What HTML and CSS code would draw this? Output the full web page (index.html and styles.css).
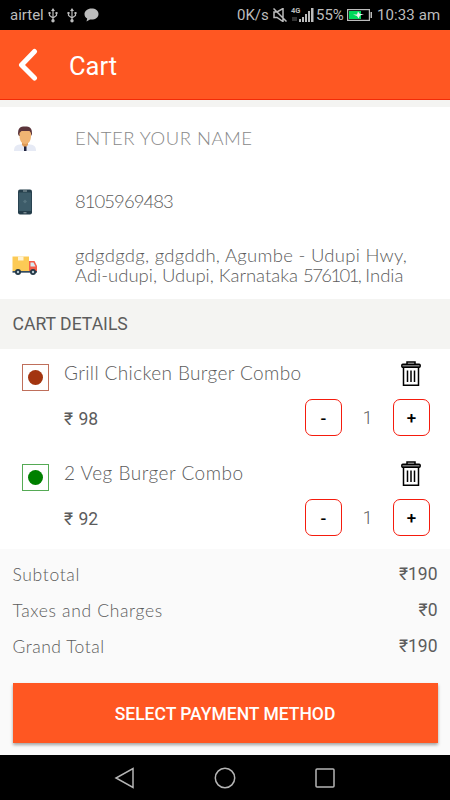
FILE: index.html
```html
<!DOCTYPE html>
<html lang="en">
<head>
<meta charset="utf-8">
<title>Cart</title>
<link rel="stylesheet" href="styles.css">
</head>
<body>
<svg class="defs" aria-hidden="true">
  <symbol id="usb" viewBox="0 0 10 15"><path d="M5 1.500V13M1.500 4.500v3L5 10l3.500-2.500v-3" fill="none" stroke="currentColor" stroke-width="1.200"/><path d="M5 0l2 3H3zM.5 4h2v2h-2zM7.500 4h2v2h-2z" fill="currentColor"/><circle cx="5" cy="12.800" r="1.700" fill="currentColor"/></symbol>
  <symbol id="trash" viewBox="0 0 20 26"><path d="M6 3V1h8v2M2.500 6.500V24.200h15V6.500M6.500 9.500V21M10 9.500V21M13.500 9.500V21" fill="none" stroke="#000" stroke-width="1.500"/><rect x=".8" y="3.300" width="18.400" height="3" rx="1" fill="#777" stroke="#000" stroke-width="1.400"/></symbol>
</svg>
<div class="status">
  <span class="carrier">airtel</span>
  <svg class="usb"><use href="#usb"/></svg>
  <svg class="usb second"><use href="#usb"/></svg>
  <svg class="bubble" viewBox="0 0 15 14"><path d="M7.500.5C3.500.5.5 3 .5 6c0 2 1 3.500 2.700 4.500L2.500 13.500 6 11.500c5 .6 8.500-2 8.500-5.500S11.500.5 7.500.5z" fill="#bcbcbc"/></svg>
  <span class="speed">0K/s</span>
  <svg class="mute" viewBox="0 0 14 14"><path d="M1 4h3l6-3.500v13L4 9.500H1zM.5.5l13 13" fill="none" stroke="#bcbcbc" stroke-width="1.500"/></svg>
  <div class="signal"><span class="net">4G</span>
  <svg viewBox="0 0 23 14" width="23" height="14"><path d="M1 9h5v4H1z" fill="#333"/><path d="M8 11h2v3H8zM11 9h2v5h-2zM14 6h2v8h-2zM17 3h2v11h-2zM20 0h2.500v14H20z" fill="#bcbcbc"/></svg></div>
  <span class="percent">55%</span>
  <svg class="battery" viewBox="0 0 25 12"><rect x=".6" y=".6" width="21.800" height="10.800" fill="#000" stroke="#bcbcbc" stroke-width="1.200"/><path d="M2 2h12v8H2z" fill="#00d85a"/><path d="M23.500 3H25v6h-1.500z" fill="#bcbcbc"/><path d="M6 5.500h4l1-3 2 2.500h4L13 6.500l-1.500 3L10 7z" fill="#eee"/></svg>
  <span class="clock">10:33 am</span>
</div>
<header class="bar">
  <svg class="back" viewBox="0 0 20 34"><path d="M16.500 3.500L3.500 17l13 13" fill="none" stroke="#fff" stroke-width="5" stroke-linecap="round" stroke-linejoin="round"/></svg>
  <h1>Cart</h1>
</header>
<section class="contact">
  <div class="row">
    <svg class="icon" viewBox="0 0 26 26"><path d="M2 25c0-5 2-6 8-7h6c6 1 8 2 8 7z" fill="#e6eaf5"/><path d="M10 15h6v4l-3 3-3-3z" fill="#df9a56"/><path d="M6 8C6 2 8 .5 13 .5S20 2 20 8l-1 2H7z" fill="#5b343b"/><path d="M7.500 7l2-2h8L19 7v3c0 5-2.500 8-5.700 8S7.500 15 7.500 10z" fill="#f0b473"/><path d="M12 20.500h2.500v4.500H12z" fill="#20233d"/></svg>
    <span class="text name">ENTER YOUR NAME</span>
  </div>
  <div class="row">
    <svg class="icon" viewBox="0 0 26 26"><rect x="6" y=".5" width="14" height="25" rx="2" fill="#253e4b"/><path d="M6.800 3.500h12.400v18.500H6.800z" fill="#3d5c69"/><path d="M11 2h4M11.500 23.800h3" stroke="#9aa9ae"/><path d="M13 10.500l2 2-2 2-2-2z" fill="#55737e"/></svg>
    <span class="text phone">8105969483</span>
  </div>
  <div class="row">
    <svg class="icon" viewBox="0 0 26 26"><path d="M.5 4.500h16.500V19H.5z" fill="#fcca55"/><path d="M6 4.500h5.500v4H6z" fill="#fff3d5"/><path d="M17 9h5.500l2.500 5v6h-8z" fill="#f45d49"/><path d="M18.500 10.500h3l2 4h-5z" fill="#d8ecf4"/><path d="M.5 19h24.500v1.700H.5z" fill="#354c60"/><circle cx="6" cy="20" r="3" fill="#243746"/><circle cx="21" cy="20" r="3" fill="#243746"/><circle cx="6" cy="20" r="1.200" fill="#b9cbd3"/><circle cx="21" cy="20" r="1.200" fill="#b9cbd3"/></svg>
    <div class="text address"><div class="line1">gdgdgdg, gdgddh, Agumbe - Udupi Hwy,</div><div class="line2">Adi-udupi, Udupi, Karnataka <span class="pin">576101,</span> India</div></div>
  </div>
</section>
<h2>CART DETAILS</h2>
<section class="items">
  <article class="item">
    <div class="mark nonveg"></div>
    <div class="title grill">Grill Chicken Burger Combo</div>
    <svg class="trash"><use href="#trash"/></svg>
    <div class="price">₹ 98</div>
    <div class="stepper"><button>-</button><span>1</span><button>+</button></div>
  </article>
  <article class="item">
    <div class="mark veg"></div>
    <div class="title vegtitle">2 Veg Burger Combo</div>
    <svg class="trash"><use href="#trash"/></svg>
    <div class="price">₹ 92</div>
    <div class="stepper"><button>-</button><span>1</span><button>+</button></div>
  </article>
</section>
<section class="totals">
  <div class="total"><span class="sub">Subtotal</span><b>₹190</b></div>
  <div class="total"><span class="tax">Taxes and Charges</span><b>₹0</b></div>
  <div class="total"><span class="grand">Grand Total</span><b>₹190</b></div>
  <button class="pay">SELECT PAYMENT METHOD</button>
</section>
<nav class="nav">
  <svg viewBox="0 0 22 22"><path d="M19 1.500v19L2 11z"/></svg>
  <svg viewBox="0 0 22 22"><circle cx="11" cy="11" r="9.700"/></svg>
  <svg viewBox="0 0 22 22"><rect x="2" y="2" width="18" height="18" rx="1"/></svg>
</nav>
</body>
</html>
```
FILE: styles.css
```css
* { box-sizing: border-box; }
body { margin: 0; width: 450px; height: 800px; overflow: hidden; background: #fafafa; font-family: Roboto, sans-serif; color: #5c5c5c; }
.defs { position: absolute; width: 0; height: 0; }
svg { display: block; flex: none; }
button { font-family: inherit; padding: 0; }

.status { height: 30px; background: #000; color: #bcbcbc; display: flex; align-items: center; padding-left: 10px; font-size: 15px; line-height: 30px; white-space: nowrap; }
.carrier { width: 38px; }
.usb { width: 10px; height: 15px; }
.second { margin-left: 9px; }
.bubble { width: 15px; height: 14px; margin-left: 7px; }
.speed { margin-left: 138px; width: 36px; }
.mute { width: 14px; height: 14px; }
.signal { position: relative; margin-left: 4px; width: 23px; }
.net { position: absolute; left: 0; top: -1px; font-size: 7.500px; line-height: 7px; font-weight: 700; }
.percent { margin-left: 2px; width: 31px; }
.battery { width: 25px; height: 12px; }
.clock { margin-left: 5px; letter-spacing: .1px; }

.bar { height: 70px; background: #ff5722; border-bottom: 1px solid #f22b08; display: flex; align-items: center; padding-left: 18px; color: #fff; }
.back { width: 20px; height: 34px; }
h1 { margin: 3px 0 0 31px; font-size: 25.500px; line-height: 32px; font-weight: 400; }

.contact { height: 199px; border-top: 7px solid #f4f4f2; background: #fff; }
.row { height: 63px; display: flex; align-items: center; padding-left: 12px; }
.icon { width: 26px; height: 26px; }
.text { margin-left: 37px; font-family: Lato, sans-serif; font-weight: 300; font-size: 18.500px; line-height: 20px; white-space: nowrap; }
.name { color: #888; letter-spacing: .5px; padding-bottom: 1px; }
.phone { letter-spacing: -.95px; padding-bottom: 1px; }
.line1 { letter-spacing: .29px; }
.pin { letter-spacing: -1.600px; }

h2 { margin: 0; height: 50px; padding-left: 12.500px; background: #f4f4f2; font-size: 17.600px; line-height: 50px; font-weight: 400; }

.items { background: #fff; }
.item { height: 100px; padding: 8px 20px 0 22px; display: grid; grid-template-columns: 42px 1fr 125px; grid-template-rows: 32px 56px; }
.mark { width: 27px; height: 27px; margin-top: 7px; border: 1px solid; display: flex; align-items: center; justify-content: center; }
.mark::after { content: ""; width: 15.500px; height: 15.500px; border-radius: 50%; background: currentColor; }
.nonveg { color: #a33510; border-color: #bf6f5b; }
.veg { color: #008000; border-color: #55aa55; }
.title { font-family: Lato, sans-serif; font-weight: 300; font-size: 19px; line-height: 32px; white-space: nowrap; }
.grill { letter-spacing: .37px; }
.vegtitle { letter-spacing: .5px; }
.trash { width: 20px; height: 26px; margin: 4px 9px 0 auto; }
.price { grid-column: 2; padding-top: 2px; font-size: 17.500px; line-height: 56px; word-spacing: 1px; }
.stepper { display: flex; align-items: center; justify-content: space-between; font-size: 17.500px; }
.stepper button { width: 37px; height: 37px; padding-top: 2px; border: 1px solid #f51b0d; border-radius: 7px; background: #fff; color: #000; font-size: 17px; font-weight: 500; }
.stepper span { padding-top: 2px; font-weight: 300; }

.totals { height: 206px; padding: 7px 12.500px 0; }
.total { height: 36px; display: flex; align-items: center; justify-content: space-between; font-size: 17.500px; }
.total span { font-family: Lato, sans-serif; font-weight: 300; letter-spacing: .65px; }
.total .grand { letter-spacing: .5px; }
.total b { font-weight: 400; }
.pay { display: block; width: 425px; height: 60px; margin-top: 19px; padding-top: 1px; border: 0; background: #ff5722; color: #fff; font-size: 17.500px; font-weight: 500; box-shadow: 0 2px 3px rgba(0,0,0,.35); }

.nav { height: 45px; background: #000; display: flex; justify-content: space-between; align-items: center; padding: 0 114px; }
.nav svg { width: 22px; height: 22px; fill: none; stroke: #b5b5b5; stroke-width: 1.500; }
```
